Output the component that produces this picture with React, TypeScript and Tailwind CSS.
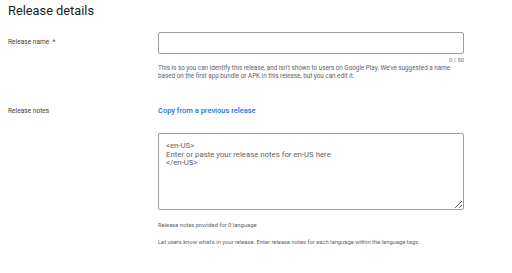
import React from "react";

const font = { fontFamily: "Roboto, 'Liberation Sans', sans-serif" };

export default function App() {
    return (
        <div className="w-[512px] h-[273px] bg-white overflow-hidden px-2 text-[#3c4043]" style={font}>
            <h1 className="pt-[3px] text-[12.8px] leading-[16px] font-normal text-[#202124]">Release details</h1>

            <div className="mt-[13px] grid grid-cols-[150px_306px]">
                <div className="pt-[6px] text-[6.6px] leading-[8px]">Release name&nbsp;&nbsp;*</div>
                <div>
                    <input
                        type="text"
                        className="block w-full h-[22px] rounded-[2px] border border-[#9e9e9e] bg-white outline-none"
                    />
                    <div className="mt-[2px] text-right text-[5.8px] leading-[8px] text-[#757575]">0 / 50</div>
                    <p className="text-[6.3px] leading-[8px] text-[#5f6368]">
                        This is so you can identify this release, and isn't shown to users on Google Play. We've suggested a name based on the first app bundle or APK in this release, but you can edit it.
                    </p>
                </div>
            </div>

            <div className="mt-[27px] grid grid-cols-[150px_306px]">
                <div className="text-[6.6px] leading-[8px]">Release notes</div>
                <div>
                    <a className="block text-[7.5px] leading-[8px] font-medium text-[#1a73e8]">Copy from a previous release</a>
                    <textarea
                        className="mt-[18px] block w-full h-[77px] rounded-[2px] border border-[#9e9e9e] bg-white pt-[8px] px-[7px] text-[7.8px] leading-[8.7px] text-[#5f6368] outline-none"
                        defaultValue={"<en-US>\nEnter or paste your release notes for en-US here\n</en-US>"}
                    />
                    <p className="mt-[11px] text-[5.8px] leading-[8px] text-[#5f6368]">Release notes provided for 0 language</p>
                    <p className="mt-[9px] text-[5.8px] leading-[8px] text-[#5f6368]">
                        Let users know what's in your release. Enter release notes for each language within the language tags.
                    </p>
                </div>
            </div>
        </div>
    );
}
